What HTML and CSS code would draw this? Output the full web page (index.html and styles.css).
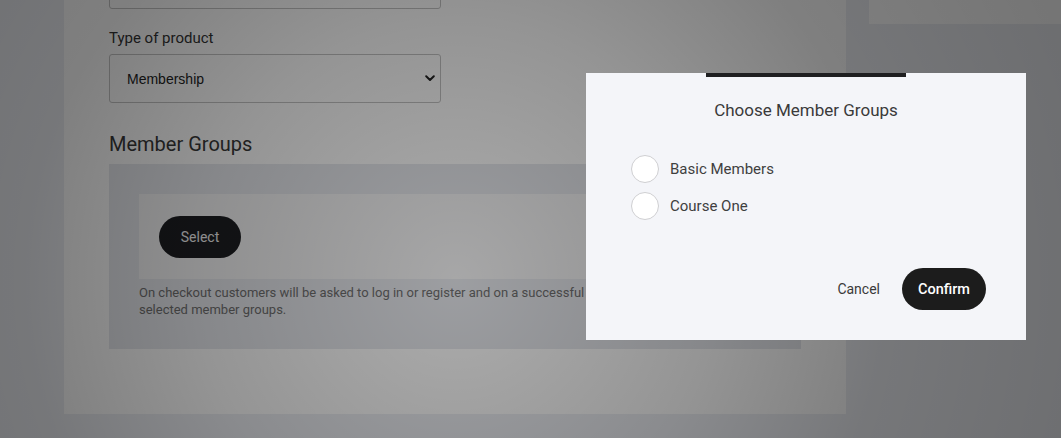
FILE: index.html
```html
<!DOCTYPE html>
<html lang="en">
<head>
<meta charset="utf-8">
<title>Product – Member Groups</title>
<link rel="stylesheet" href="styles.css">
</head>
<body>
<div class="page">
  <main class="panel">
    <div class="field-input"></div>
    <label class="field-label">Type of product</label>
    <div class="select">
      <span class="select-value">Membership</span>
      <svg class="chevron" width="10" height="7" viewBox="0 0 10 7"><path d="M1.2 1.3 L5 5 L8.8 1.3" fill="none" stroke="#222" stroke-width="2" stroke-linecap="round" stroke-linejoin="round"/></svg>
    </div>
    <h2 class="section-title">Member Groups</h2>
    <section class="groups-box">
      <div class="groups-inner">
        <button class="btn-dark btn-select">Select</button>
      </div>
      <p class="help">On checkout customers will be asked to log in or register and on a successful purchase be added to the selected member groups.</p>
    </section>
  </main>
  <aside class="side-panel"></aside>
</div>

<div class="overlay"></div>

<div class="modal">
  <div class="modal-bar"></div>
  <h3 class="modal-title">Choose Member Groups</h3>
  <ul class="options">
    <li class="option"><span class="radio"></span><span class="option-label">Basic Members</span></li>
    <li class="option"><span class="radio"></span><span class="option-label">Course One</span></li>
  </ul>
  <div class="modal-actions">
    <button class="btn-link">Cancel</button>
    <button class="btn-dark btn-confirm">Confirm</button>
  </div>
</div>
</body>
</html>
```

FILE: styles.css
```css
* { box-sizing: border-box; }
html, body { margin: 0; padding: 0; }
body {
  width: 1061px;
  height: 438px;
  overflow: hidden;
  background: #edeff4;
  font-family: Roboto, "Liberation Sans", Arial, sans-serif;
  color: #333;
  position: relative;
}

.page {
  display: flex;
  align-items: flex-start;
  gap: 23px;
  padding-left: 64px;
  height: 100%;
}

.panel {
  width: 782px;
  height: 414px;
  background: #ffffff;
  padding: 0 45px;
  display: flex;
  flex-direction: column;
  align-items: flex-start;
}

.field-input {
  width: 332px;
  height: 49px;
  margin-top: -40px;
  border: 1px solid #c4c4c4;
  border-radius: 3px;
  background: #fff;
}

.field-label {
  margin-top: 19px;
  font-size: 15px;
  line-height: 20px;
  color: #333;
}

.select {
  margin-top: 6px;
  width: 332px;
  height: 49px;
  border: 1px solid #c4c4c4;
  border-radius: 3px;
  display: flex;
  align-items: center;
  justify-content: space-between;
  padding: 0 5px 0 17px;
}
.select-value {
  font-family: "Liberation Sans", Arial, sans-serif;
  font-size: 14px;
  color: #222;
}
.chevron { display: block; }

.section-title {
  margin: 29px 0 8px;
  font-size: 20px;
  font-weight: 400;
  line-height: 24px;
  color: #383838;
}

.groups-box {
  width: 692px;
  height: 185px;
  background: #e7e9ee;
  padding: 30px 30px 0;
}
.groups-inner {
  height: 85px;
  background: #f6f6f7;
  padding: 22px 20px;
}
.btn-dark {
  border: none;
  border-radius: 21px;
  background: #1d1e22;
  color: #ffffff;
  font-family: Roboto, "Liberation Sans", Arial, sans-serif;
  cursor: pointer;
}
.btn-select {
  width: 82px;
  height: 42px;
  font-size: 14px;
  color: #f2f2f2;
}
.help {
  margin: 5px 0 0;
  font-size: 13px;
  line-height: 17px;
  color: #707070;
}

.side-panel {
  flex: 1;
  height: 24px;
  background: #ffffff;
}

.overlay {
  position: absolute;
  inset: 0;
  background: radial-gradient(circle at 43% 64%, rgba(0,0,0,0.32) 0px, rgba(0,0,0,0.42) 260px, rgba(0,0,0,0.5) 430px, rgba(0,0,0,0.54) 650px);
}

.modal {
  position: absolute;
  left: 586px;
  top: 73px;
  width: 440px;
  height: 267px;
  background: #f4f5f9;
  display: flex;
  flex-direction: column;
  padding: 0 40px 30px 40px;
}
.modal-bar {
  align-self: center;
  width: 200px;
  height: 4px;
  background: #1f1f21;
}
.modal-title {
  margin: 23px 0 0;
  align-self: center;
  font-size: 17px;
  font-weight: 400;
  line-height: 20px;
  color: #3a3a3a;
}
.options {
  list-style: none;
  margin: 35px 0 0;
  padding: 0 0 0 5px;
  display: flex;
  flex-direction: column;
  gap: 9px;
}
.option {
  display: flex;
  align-items: center;
  gap: 11px;
}
.radio {
  width: 28px;
  height: 28px;
  border-radius: 50%;
  background: #ffffff;
  border: 1px solid #cfcfd2;
}
.option-label {
  font-size: 15px;
  color: #3f3f3f;
}
.modal-actions {
  margin-top: auto;
  display: flex;
  justify-content: flex-end;
  align-items: center;
  gap: 22px;
}
.btn-link {
  border: none;
  background: none;
  padding: 0;
  font-family: Roboto, "Liberation Sans", Arial, sans-serif;
  font-size: 14px;
  color: #3a3a3a;
  cursor: pointer;
}
.btn-confirm {
  width: 84px;
  height: 42px;
  font-size: 14.5px;
  font-weight: 500;
  background: #1c1c1c;
  color: #ffffff;
}
```
